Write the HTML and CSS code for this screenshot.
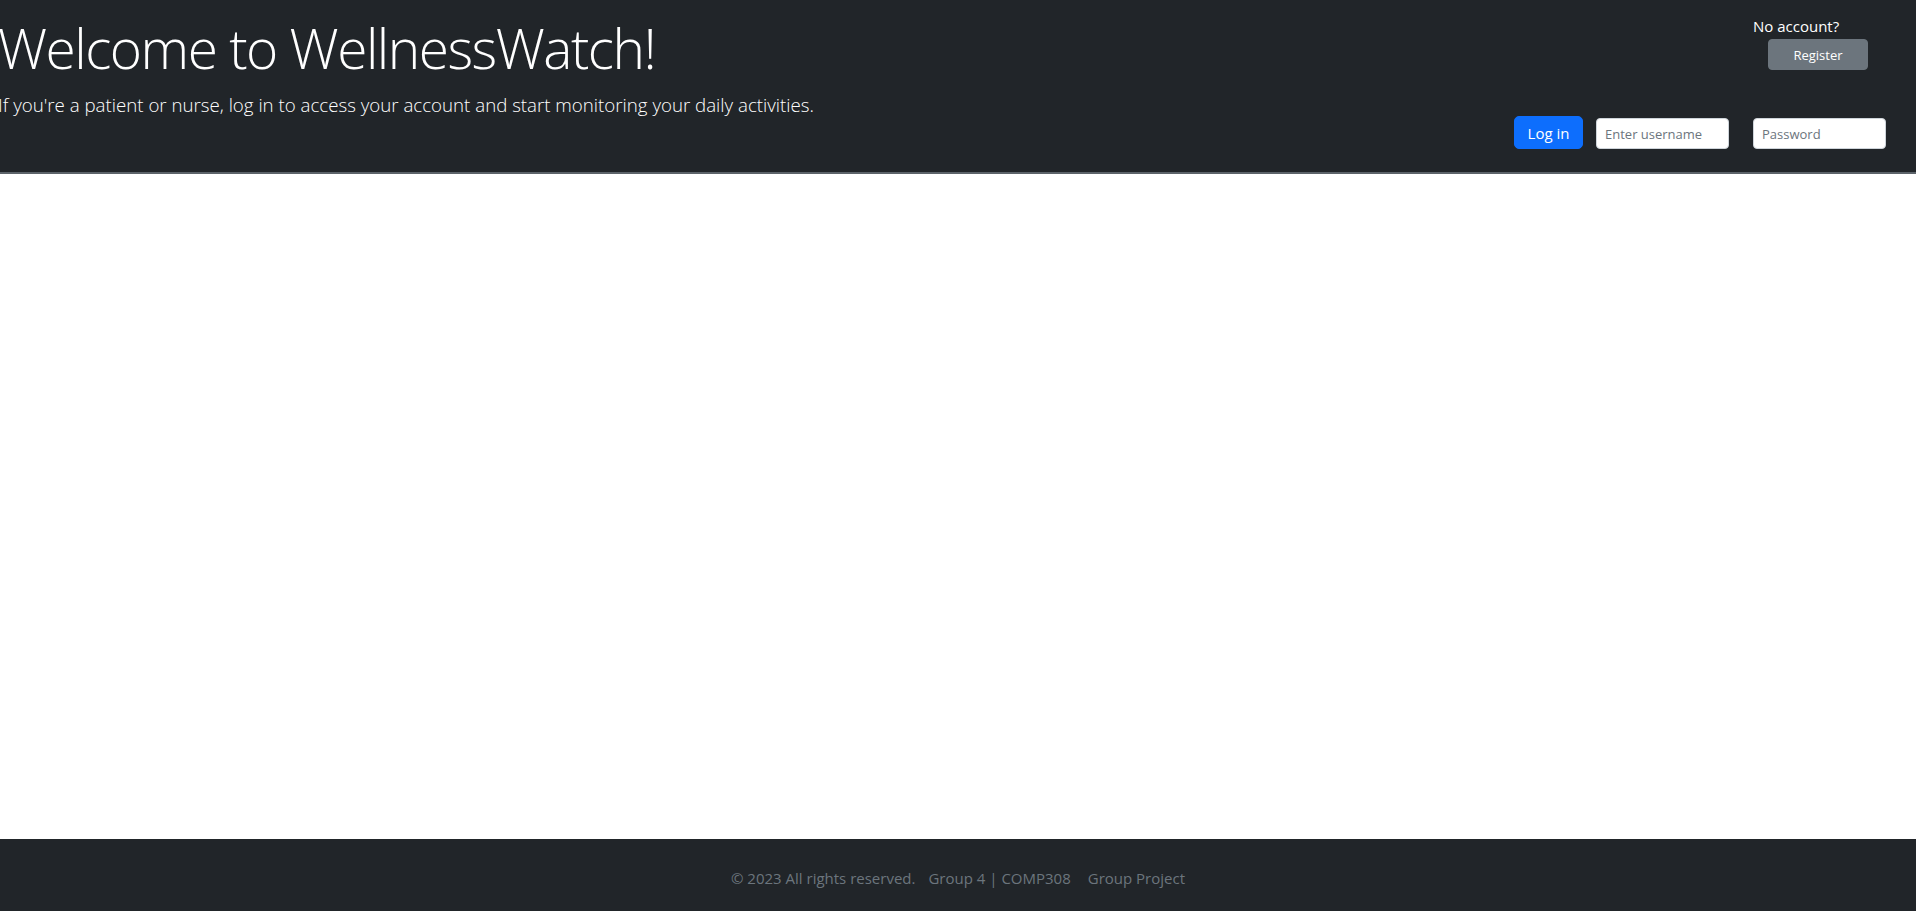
FILE: index.html
```html
<!DOCTYPE html>
<html lang="en">
<head>
<meta charset="utf-8">
<title>WellnessWatch</title>
<link rel="stylesheet" href="styles.css">
</head>
<body>
<div class="page">
  <header class="site-header">
    <div class="intro">
      <h1 class="title">Welcome to WellnessWatch!</h1>
      <p class="lead">If you're a patient or nurse, log in to access your account and start monitoring your daily activities.</p>
    </div>
    <div class="auth">
      <div class="register-box">
        <span class="no-account">No account?</span>
        <button class="btn btn-secondary" type="button">Register</button>
      </div>
      <form class="login-row">
        <button class="btn btn-primary" type="button">Log in</button>
        <input class="field" type="text" placeholder="Enter username">
        <input class="field" type="password" placeholder="Password">
      </form>
    </div>
  </header>
  <main class="content"></main>
  <footer class="site-footer">
    <span class="foot-item">© 2023 All rights reserved.</span>
    <span class="foot-item foot-mid">Group 4 | COMP308</span>
    <span class="foot-item">Group Project</span>
  </footer>
</div>
</body>
</html>
```

FILE: styles.css
```css
* { box-sizing: border-box; }

html, body {
  margin: 0;
  padding: 0;
}

body {
  font-family: "Open Sans", "Noto Sans", sans-serif;
  color: #212529;
  background: #fff;
}

.page {
  min-height: 100vh;
  display: flex;
  flex-direction: column;
}

.site-header {
  background: #212529;
  border-bottom: 2px solid #5c636a;
  height: 174px;
  display: flex;
  justify-content: space-between;
  padding: 0 30px 0 0;
}

.intro {
  padding-top: 15px;
  margin-left: -2px;
}

.title {
  margin: 0;
  font-size: 55px;
  font-weight: 300;
  line-height: 1.2;
  color: #fff;
  letter-spacing: -1.5px;
}

.lead {
  margin: 10px 0 0;
  font-size: 18.7px;
  font-weight: 300;
  color: #fff;
  line-height: 1.5;
}

.auth {
  display: flex;
  flex-direction: column;
  align-items: flex-end;
  padding-top: 14px;
}

.register-box {
  width: 133px;
  display: flex;
  flex-direction: column;
  align-items: flex-start;
}

.no-account {
  color: #fff;
  font-size: 15px;
  line-height: 24px;
}

.btn {
  font-family: inherit;
  border: 1px solid transparent;
  border-radius: 4px;
  color: #fff;
  cursor: pointer;
}

.btn-secondary {
  margin-left: 15px;
  margin-top: 1px;
  width: 100px;
  height: 31px;
  font-size: 13px;
  background: #6c757d;
  border-color: #6c757d;
}

.login-row {
  margin-top: 46px;
  display: flex;
  align-items: flex-end;
}

.btn-primary {
  width: 69px;
  height: 33px;
  font-size: 15px;
  background: #0d6efd;
  border-color: #0d6efd;
  border-radius: 5px;
  margin-right: 13px;
  align-self: flex-start;
}

.field {
  width: 133px;
  height: 31px;
  padding: 4px 8px;
  font-family: inherit;
  font-size: 13px;
  color: #212529;
  background: #fff;
  border: 1px solid #ced4da;
  border-radius: 4px;
}

.field + .field {
  margin-left: 24px;
}

.field::placeholder {
  color: #6c757d;
}

.content {
  flex: 1;
  background: #fff;
}

.site-footer {
  background: #212529;
  height: 72px;
  padding-top: 6px;
  display: flex;
  justify-content: center;
  align-items: center;
  color: #6c757d;
  font-size: 15px;
}

.foot-mid {
  margin: 0 17px 0 13px;
}
```
